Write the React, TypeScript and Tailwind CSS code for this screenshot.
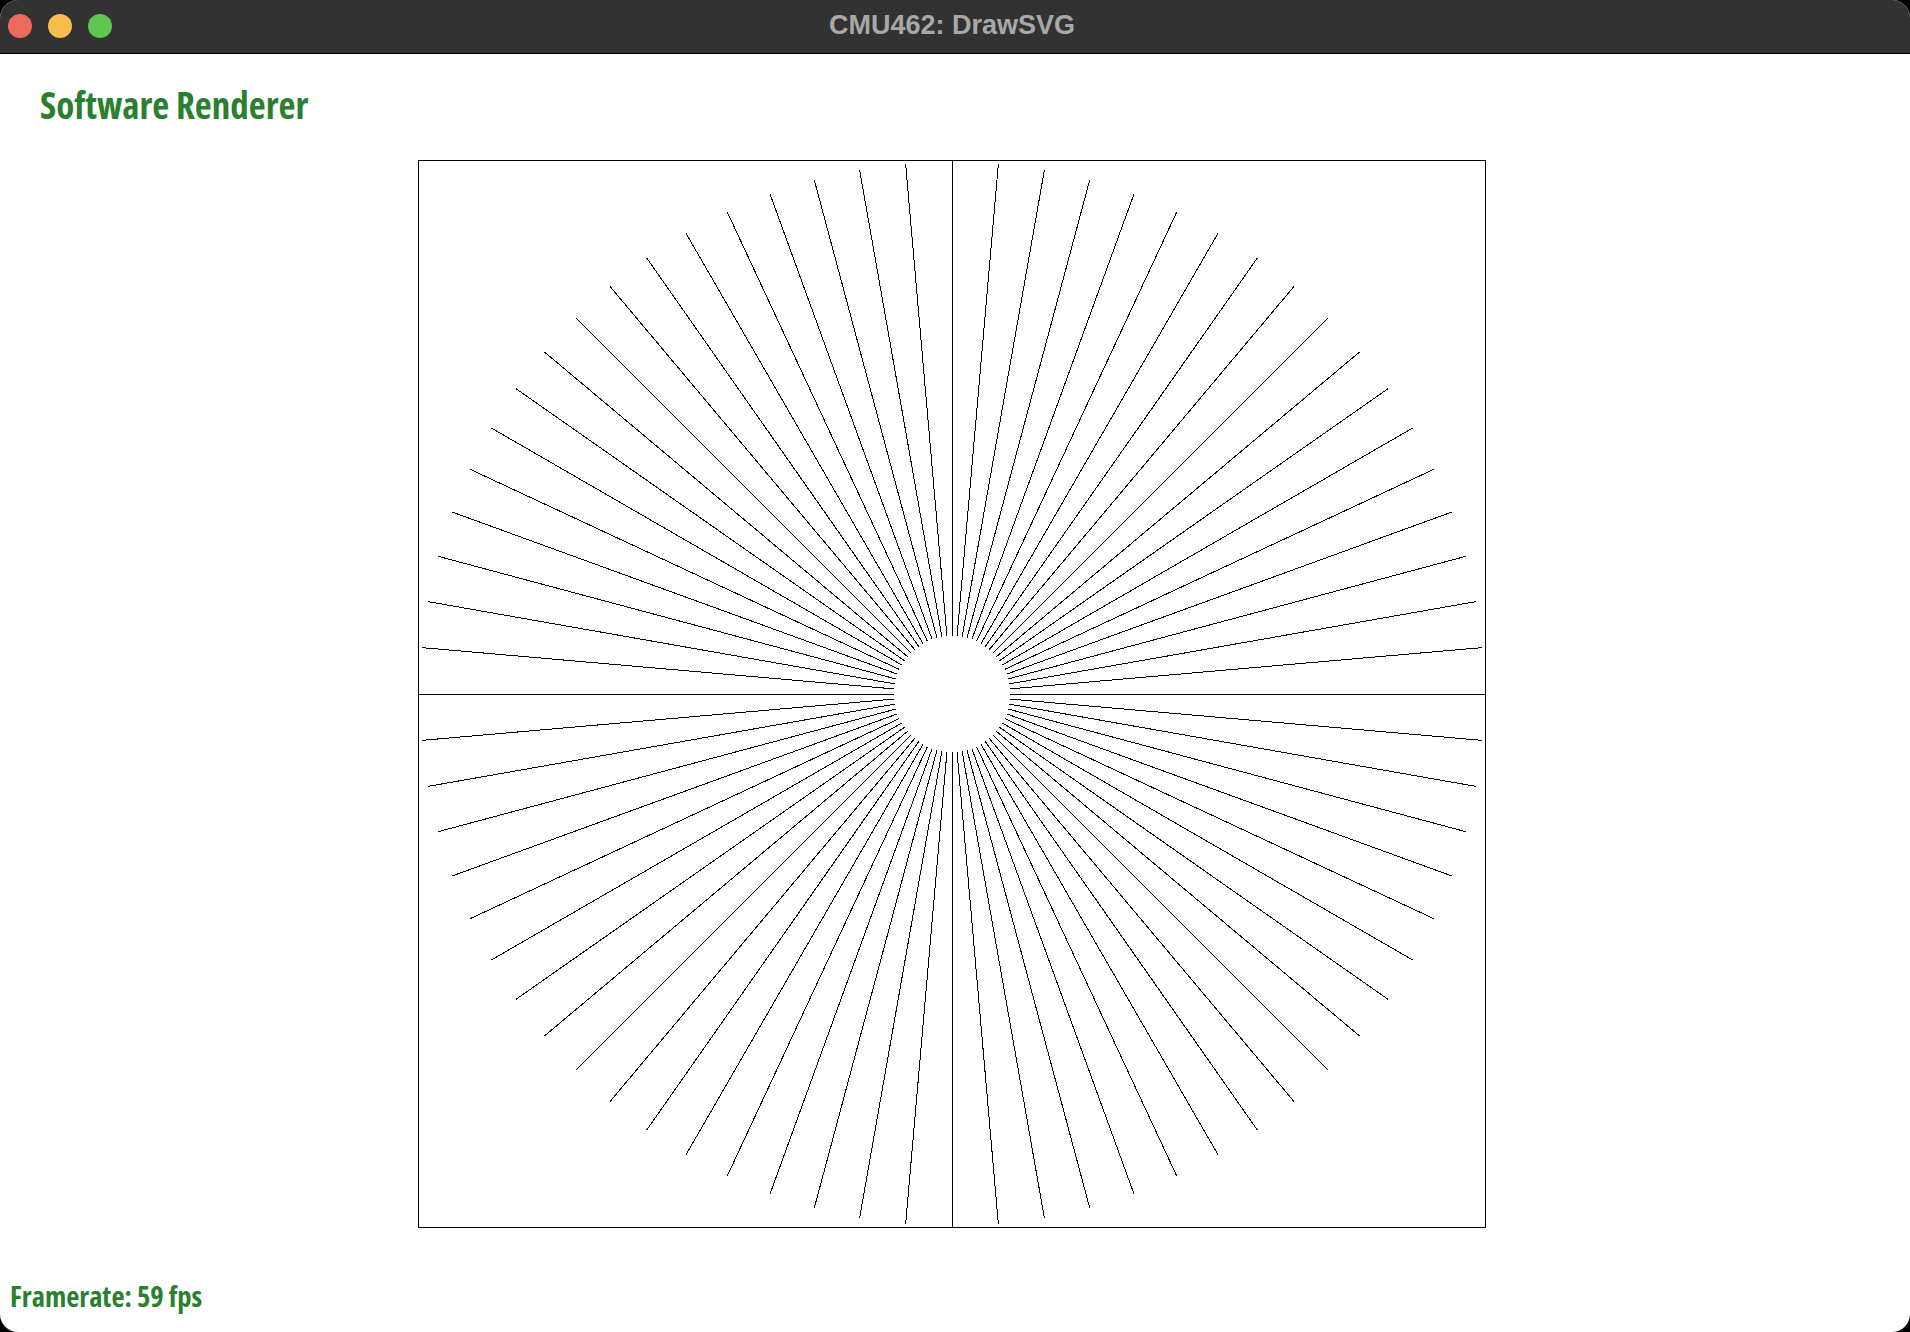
import React from 'react'

const CX = 534
const CY = 534
const R_IN = 58
const R_OUT = 532

// rays every 5 degrees, like the software renderer test scene
const rays = Array.from({ length: 72 }, (_, i) => {
  const a = (i * 5 * Math.PI) / 180
  const out = i % 18 === 0 ? 536 : R_OUT
  return {
    x1: CX + Math.sin(a) * R_IN,
    y1: CY - Math.cos(a) * R_IN,
    x2: CX + Math.sin(a) * out,
    y2: CY - Math.cos(a) * out,
  }
})

const App = () => {
  return (
    <div className='w-[1910px] h-[1332px] bg-black'>
      <div className='w-full h-full bg-white rounded-[18px] overflow-hidden flex flex-col'>
        {/* Title bar */}
        <div className='relative h-[54px] pb-[3px] bg-[#323232] border-b border-black flex items-center justify-center shrink-0'>
          <div className='absolute left-[8px] top-[14px] flex gap-[16px]'>
            <div className='w-[24px] h-[24px] rounded-full bg-[#ed6a5e]'></div>
            <div className='w-[24px] h-[24px] rounded-full bg-[#f5bf4f]'></div>
            <div className='w-[24px] h-[24px] rounded-full bg-[#61c554]'></div>
          </div>
          <span className='font-["Liberation_Sans",Arial,sans-serif] font-bold text-[27px] leading-none text-[#a8a8a8] -ml-[6px]'>
            CMU462: DrawSVG
          </span>
        </div>

        {/* Heading */}
        <h1 className='mt-[32px] ml-[40px] font-["Open_Sans",sans-serif] font-bold font-stretch-condensed text-[37px] leading-none text-[#2a802e]'>
          Software Renderer
        </h1>

        {/* Canvas */}
        <div className='mt-[37px] ml-[418px] w-[1068px] h-[1068px] border border-black'>
          <svg width='1066' height='1066' viewBox='1 1 1066 1066' shapeRendering='crispEdges'>
            {rays.map((r, i) => (
              <line key={i} x1={r.x1} y1={r.y1} x2={r.x2} y2={r.y2} stroke='#000' strokeWidth='1' />
            ))}
          </svg>
        </div>

        {/* Footer */}
        <p className='mt-[54px] ml-[10px] font-["Open_Sans",sans-serif] font-bold font-stretch-condensed text-[28.5px] leading-none text-[#2a802e]'>
          Framerate: 59 fps
        </p>
      </div>
    </div>
  )
}

export default App
